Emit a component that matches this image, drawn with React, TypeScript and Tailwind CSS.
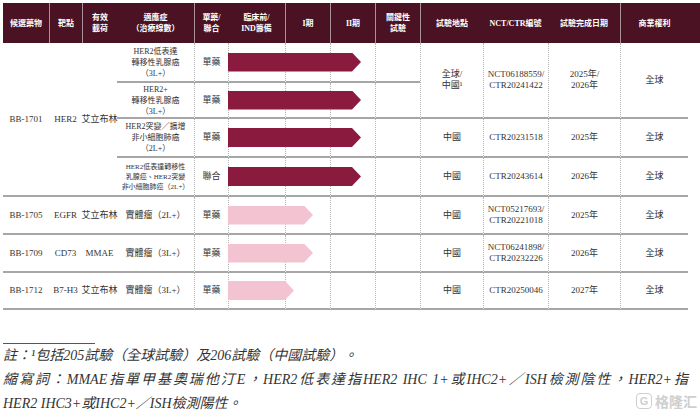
import type { ReactNode } from "react";

const FONT = "font-['Liberation_Serif','Noto_Sans_CJK_TC',serif]";
const GRID = "grid grid-cols-[46px_33px_35px_77px_34px_57px_45px_45px_45px_63px_65px_72px_68px]";
const DOT = "border-l border-l-[#b5b5b5] [border-left-style:dotted]";

const H = ({ sep, children }: { sep?: boolean; children: ReactNode }) => (
  <div className={`flex items-center justify-center text-center ${sep ? "border-l border-l-[#a8939a]" : ""}`}>
    <div>{children}</div>
  </div>
);

const Cell = ({
  dotted,
  className = "",
  children,
}: {
  dotted?: boolean;
  className?: string;
  children?: ReactNode;
}) => (
  <div
    className={`flex flex-col items-center justify-center text-center border-b-2 border-b-[#a6a6a6] ${
      dotted ? DOT : ""
    } ${className}`}
  >
    {children}
  </div>
);

const Arrow = ({ width, dark }: { width: number; dark?: boolean }) => (
  <div
    className={`relative z-10 -ml-px h-[19px] shrink-0 [clip-path:polygon(0_0,calc(100%_-_9px)_0,100%_50%,calc(100%_-_9px)_100%,0_100%)] ${
      dark ? "bg-[#8a1b3f]" : "bg-[#f4c3d1]"
    }`}
    style={{ width }}
  />
);

const BarCell = ({ width, dark }: { width: number; dark?: boolean }) => (
  <Cell dotted className="!items-start">
    <Arrow width={width} dark={dark} />
  </Cell>
);

const Lines = ({ lines }: { lines: string[] }) => (
  <>
    {lines.map((l, i) => (
      <div key={i}>{l}</div>
    ))}
  </>
);

const rows = [
  { id: "BB-1705", target: "EGFR", payload: "艾立布林", ind: "實體瘤（2L+）", bar: 85, no: ["NCT05217693/", "CTR20221018"], date: "2025年" },
  { id: "BB-1709", target: "CD73", payload: "MMAE", ind: "實體瘤（3L+）", bar: 85, no: ["NCT06241898/", "CTR20232226"], date: "2026年" },
  { id: "BB-1712", target: "B7-H3", payload: "艾立布林", ind: "實體瘤（3L+）", bar: 66, no: ["CTR20250046"], date: "2027年" },
];

export default function App() {
  return (
    <div className={`relative w-[700px] h-[411px] overflow-hidden bg-white pl-[3px] pt-[3px] ${FONT}`}>
      {/* header */}
      <div className={`${GRID} h-[40px] bg-[#4a1223] text-white font-bold text-[8px] leading-[11px]`}>
        <H>候選藥物</H>
        <H sep>靶點</H>
        <H sep>有效<br />載荷</H>
        <H>適應症<br />（治療線數）</H>
        <H sep>單藥/<br />聯合</H>
        <H>臨床前/<br />IND籌備</H>
        <H sep>I期</H>
        <H sep>II期</H>
        <H sep>關鍵性<br />試驗</H>
        <H sep>試驗地點</H>
        <H>NCT/CTR編號</H>
        <H>試驗完成日期</H>
        <H sep>商業權利</H>
      </div>

      {/* body */}
      <div className={`${GRID} grid-rows-[40px_36px_39px_39px_38px_38px_37px] text-[9px] leading-[11px] text-[#333]`}>
        {/* BB-1701 */}
        <Cell className="row-span-4">BB-1701</Cell>
        <Cell className="row-span-4">HER2</Cell>
        <Cell className="row-span-4 whitespace-nowrap">艾立布林</Cell>
        <Cell className="text-[8px]">
          <Lines lines={["HER2低表達", "轉移性乳腺癌", "（3L+）"]} />
        </Cell>
        <Cell dotted>單藥</Cell>
        <BarCell width={133} dark />
        <Cell dotted />
        <Cell dotted />
        <Cell dotted />
        <Cell dotted className="row-span-2">
          <Lines lines={["全球/", "中國¹"]} />
        </Cell>
        <Cell dotted className="row-span-2">
          <Lines lines={["NCT06188559/", "CTR20241422"]} />
        </Cell>
        <Cell dotted className="row-span-2">
          <Lines lines={["2025年/", "2026年"]} />
        </Cell>
        <Cell dotted className="row-span-2">全球</Cell>

        <Cell className="text-[8px]">
          <Lines lines={["HER2+", "轉移性乳腺癌", "（3L+）"]} />
        </Cell>
        <Cell dotted>單藥</Cell>
        <BarCell width={133} dark />
        <Cell dotted />
        <Cell dotted />
        <Cell dotted />

        <Cell className="text-[8px]">
          <Lines lines={["HER2突變／擴增", "非小細胞肺癌", "（2L+）"]} />
        </Cell>
        <Cell dotted>單藥</Cell>
        <BarCell width={133} dark />
        <Cell dotted />
        <Cell dotted />
        <Cell dotted />
        <Cell dotted>中國</Cell>
        <Cell dotted>CTR20231518</Cell>
        <Cell dotted>2025年</Cell>
        <Cell dotted>全球</Cell>

        <Cell className="text-[7px] leading-[10px]">
          <Lines lines={["HER2低表達轉移性", "乳腺癌、HER2突變", "非小細胞肺癌（2L+）"]} />
        </Cell>
        <Cell dotted>聯合</Cell>
        <BarCell width={133} dark />
        <Cell dotted />
        <Cell dotted />
        <Cell dotted />
        <Cell dotted>中國</Cell>
        <Cell dotted>CTR20243614</Cell>
        <Cell dotted>2026年</Cell>
        <Cell dotted>全球</Cell>

        {rows.map((r) => (
          <div key={r.id} className="contents">
            <Cell>{r.id}</Cell>
            <Cell>{r.target}</Cell>
            <Cell className="whitespace-nowrap">{r.payload}</Cell>
            <Cell>{r.ind}</Cell>
            <Cell dotted>單藥</Cell>
            <BarCell width={r.bar} />
            <Cell dotted />
            <Cell dotted />
            <Cell dotted />
            <Cell dotted>中國</Cell>
            <Cell dotted>
              <Lines lines={r.no} />
            </Cell>
            <Cell dotted>{r.date}</Cell>
            <Cell dotted>全球</Cell>
          </div>
        ))}
      </div>

      {/* notes */}
      <div className="mt-[33px] h-px w-[92px] bg-[#555]" />
      <div className="w-[685px] text-[14px] leading-[24px] italic text-[#333]">
        <div>註：¹包括205試驗（全球試驗）及206試驗（中國試驗）。</div>
        <div className="text-justify [text-align-last:justify]">
          縮寫詞：MMAE指單甲基奧瑞他汀E，HER2低表達指HER2 IHC 1+或IHC2+／ISH檢測陰性，HER2+指
        </div>
        <div>HER2 IHC3+或IHC2+／ISH檢測陽性。</div>
      </div>

      {/* watermark */}
      <div className="absolute right-[3px] bottom-[2px] flex items-center gap-[3px] text-[#cfcfcf]">
        <div className="flex h-[16px] w-[16px] items-center justify-center rounded-[4px] border-[1.5px] border-[#cfcfcf] font-['Liberation_Sans',sans-serif] text-[11px] font-bold leading-none">
          G
        </div>
        <div className="font-['Noto_Sans_CJK_SC',sans-serif] text-[14px] font-bold leading-none not-italic">格隆汇</div>
      </div>
    </div>
  );
}
